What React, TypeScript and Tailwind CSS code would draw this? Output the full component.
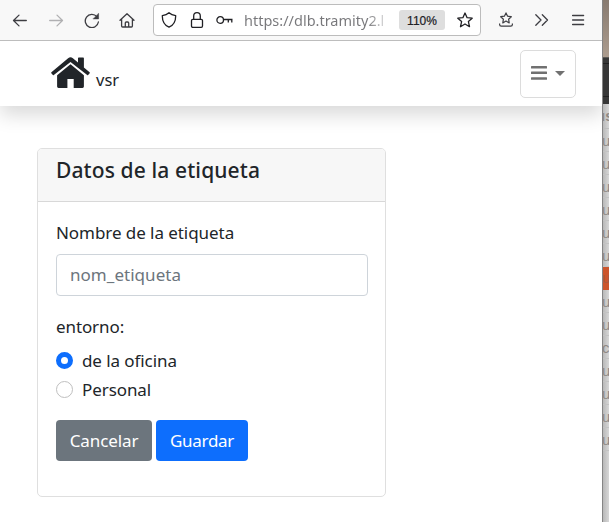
import type { ReactNode } from "react";

function Icon({ children, className = "" }: { children: ReactNode; className?: string }) {
  return (
    <svg viewBox="0 0 16 16" fill="none" stroke="currentColor" strokeWidth="1.3" strokeLinecap="round" strokeLinejoin="round" className={`size-4 shrink-0 ${className}`}>
      {children}
    </svg>
  );
}

const starPath = "M8 1 L10.1 5.7 L15.2 6.2 L11.4 9.6 L12.5 14.7 L8 12 L3.5 14.7 L4.6 9.6 L0.8 6.2 L5.9 5.7 Z";

function BrowserBar() {
  return (
    <div className="relative z-10 flex h-[41px] shrink-0 items-center border-b border-[#bdbdbd] bg-[#f8f8f8] text-[#3d3d42]">
      <Icon className="ml-3"><path d="M14.3 8.5H1.5M7 3.1L1.5 8.5L7 13.9" /></Icon>
      <Icon className="ml-5 text-[#b0b0b2]"><path d="M1.7 8.5h12.8M9 3.1L14.5 8.5L9 13.9" /></Icon>
      <Icon className="ml-5">
        <path d="M12.9 4.7A6.6 6.6 0 1 0 14.4 10" />
        <path d="M14.6 1.6v5.3H9.3Z" fill="currentColor" strokeWidth="0.5" />
      </Icon>
      <Icon className="ml-[19px]">
        <path d="M1 8.2L8 1.7L15 8.2M2.6 7v7q0 1 1 1h8.8q1 0 1-1v-7M6.3 15v-4q0-1 1-1h1.4q1 0 1 1v4" />
      </Icon>
      <div className="ml-[18px] flex h-8 w-[328px] items-center rounded-[4px] border border-[#bcbcbc] bg-white text-[#202024]">
        <Icon className="ml-[7px]">
          <path d="M8 .8Q10.5 3 14.7 3.7Q14.8 12.2 8 15.2Q1.2 12.2 1.3 3.7Q5.5 3 8 .8Z" />
        </Icon>
        <Icon className="ml-3">
          <rect x="2.5" y="7.3" width="11" height="8" rx="1.3" />
          <path d="M4.7 7V4a3.3 3.3 0 0 1 6.6 0V7" />
        </Icon>
        <svg viewBox="0 0 17 10" fill="none" stroke="currentColor" strokeWidth="1.3" className="ml-[11px] h-[10px] w-[17px] shrink-0">
          <circle cx="4.2" cy="5" r="3.3" />
          <path d="M7.5 4.5h9M12.3 4.5v3M15.8 4.5v3" />
        </svg>
        <span className="ml-[11px] w-[147px] shrink-0 overflow-hidden whitespace-nowrap bg-linear-to-r from-[#77777a] from-84% to-[#77777a00] bg-clip-text pt-px font-['Noto_Sans',sans-serif] text-[14.5px] text-transparent">
          https://dlb.tramity2.l
        </span>
        <span className="ml-[8px] flex h-5 w-[46px] shrink-0 items-center justify-center rounded-[3px] bg-[#dedede] pt-px font-['Liberation_Sans',sans-serif] text-[12px] [-webkit-text-stroke:0.2px_#202024]">110%</span>
        <Icon className="ml-[12px]"><path d={starPath} /></Icon>
      </div>
      <svg viewBox="0 0 16 16" fill="none" stroke="currentColor" strokeWidth="1.2" strokeLinejoin="round" className="ml-[17px] size-4 shrink-0">
        <path d="M8 .9L9.6 4.2L13.3 4.7L10.6 7.2L11.2 10.9L8 9.1L4.8 10.9L5.4 7.2L2.7 4.7L6.4 4.2Z" />
        <path d="M1.6 11.5v1q0 1.7 1.7 1.7h9.4q1.7 0 1.7-1.7v-1" />
      </svg>
      <Icon className="ml-5"><path d="M1.8 2.7L7 8L1.8 13.3M8.3 2.7L13.5 8L8.3 13.3" /></Icon>
      <Icon className="ml-5"><path d="M2.6 3.5h11M2.6 8h11M2.6 12.5h11" /></Icon>
    </div>
  );
}

function HouseLogo() {
  return (
    <svg viewBox="0 0 39 31" fill="currentColor" className="h-[31px] w-[39px] shrink-0">
      <path d="M.4 15.3 17.1 1.2Q19.5-.6 21.9 1.2L27 5.5V1.2Q27 .5 27.7.5H32.2Q32.9.5 32.9 1.2V10.4L38.6 15.3Q39 15.7 38.7 16.2L37.1 18.1Q36.7 18.5 36.2 18.1L19.5 4.9 2.8 18.1Q2.3 18.5 1.9 18.1L.3 16.2Q0 15.7.4 15.3Z" />
      <path d="M19.5 7.3 32.9 18.3V29.5Q32.9 30.9 31.5 30.9H22.7V22H16.4V30.9H7.5Q6.1 30.9 6.1 29.5V18.3Z" />
    </svg>
  );
}

function Navbar() {
  return (
    <header className="flex h-[65px] shrink-0 items-center justify-between bg-white pr-[26px] pl-[51px] shadow-[0_9px_18px_rgba(0,0,0,0.15)]">
      <div className="mb-[2px] flex items-end">
        <HouseLogo />
        <span className="ml-[6px] text-[16.5px] leading-[17px]">vsr</span>
      </div>
      <button className="flex h-12 w-14 items-center rounded-[5px] border border-[#dcdcdc] pl-[10px] text-[#717171]">
        <svg viewBox="0 0 16 14" fill="currentColor" className="mb-px h-[14px] w-4">
          <rect y="0" width="16" height="2.5" rx=".5" />
          <rect y="5.6" width="16" height="2.5" rx=".5" />
          <rect y="11.2" width="16" height="2.5" rx=".5" />
        </svg>
        <span className="ml-[8px] border-x-[5px] border-t-[5px] border-x-transparent border-t-[#717171]" />
      </button>
    </header>
  );
}

function Radio({ label, checked = false }: { label: string; checked?: boolean }) {
  return (
    <label className="flex h-[29px] items-center text-[17px] tracking-[-0.08px]">
      <span className={checked ? "size-[17px] rounded-full border-[5px] border-[#0d6efd] bg-white" : "size-[17px] rounded-full border border-[#bfbfbf] bg-white"} />
      <span className="ml-[9px]">{label}</span>
    </label>
  );
}

function LabelCard() {
  return (
    <section className="mt-[42px] ml-[37px] h-[349px] w-[349px] rounded-[5px] border border-[#dfdfdf] bg-white">
      <div className="h-[53px] rounded-t-[4px] border-b border-[#d8d8d8] bg-[#f7f7f7] pt-[7px] pl-[18px]">
        <h5 className="text-[21px] leading-[28px] font-medium tracking-[0.12px]">Datos de la etiqueta</h5>
      </div>
      <div className="px-[18px] pt-[18px]">
        <div className="text-[17px] leading-[26px] tracking-[-0.06px]">Nombre de la etiqueta</div>
        <div className="mt-2 -mr-[1px] flex h-[42px] items-center rounded-[4px] border border-[#ced4da] pl-[13px] text-[17px] tracking-[0.04px] text-[#6c757d]">nom_etiqueta</div>
        <div className="mt-[18px] mb-[6px] text-[17px] leading-[26px] tracking-[-0.1px]">entorno:</div>
        <Radio label="de la oficina" checked />
        <Radio label="Personal" />
        <div className="mt-[16px] flex gap-1 text-[17px] text-white">
          <button className="h-[41px] w-24 rounded-[4px] bg-[#6c757d] tracking-[-0.1px]">Cancelar</button>
          <button className="h-[41px] w-[92px] rounded-[4px] bg-[#0d6efd] tracking-[-0.3px]">Guardar</button>
        </div>
      </div>
    </section>
  );
}

const backRows = ["u", "u", "u", "u", "u", "u", "u", "u", "u", "c", "u", "u", "u", "u"];

function BackgroundWindow() {
  return (
    <div className="flex w-[7px] flex-col overflow-hidden border-l border-[#858585] bg-linear-to-r from-[#b9b9b9] to-[#d7d7d7] font-['Liberation_Sans',sans-serif] text-[15px] text-[#8f8985]">
      <div className="h-[57px] shrink-0 bg-linear-to-b from-[#887b70] to-[#ac9c8e]" />
      <div className="h-[47px] shrink-0 border-t border-[#5b5955] bg-[#373737] pt-[5px]">
        <div className="h-[34px] border-y border-[#202020]" />
      </div>
      <div className="flex h-[25px] shrink-0 items-center border-b border-[#bdbdbd] font-bold"><span className="-ml-[7px]">us</span></div>
      {backRows.map((letter, index) => (
        <div key={index} className={index === 6 ? "flex h-[23px] shrink-0 items-center bg-[#cc552c] text-[#a65a40]" : "flex h-[23px] shrink-0 items-center border-b border-[#c3c3c3] pt-[2px]"}>
          <span className="-ml-[1px]">{letter}</span>
        </div>
      ))}
    </div>
  );
}

export default function App() {
  return (
    <div className="flex h-[522px] w-[609px] overflow-hidden bg-white font-['Noto_Sans',sans-serif] text-[#212529]">
      <main className="flex w-[602px] flex-col overflow-hidden bg-white">
        <BrowserBar />
        <Navbar />
        <LabelCard />
      </main>
      <BackgroundWindow />
    </div>
  );
}
